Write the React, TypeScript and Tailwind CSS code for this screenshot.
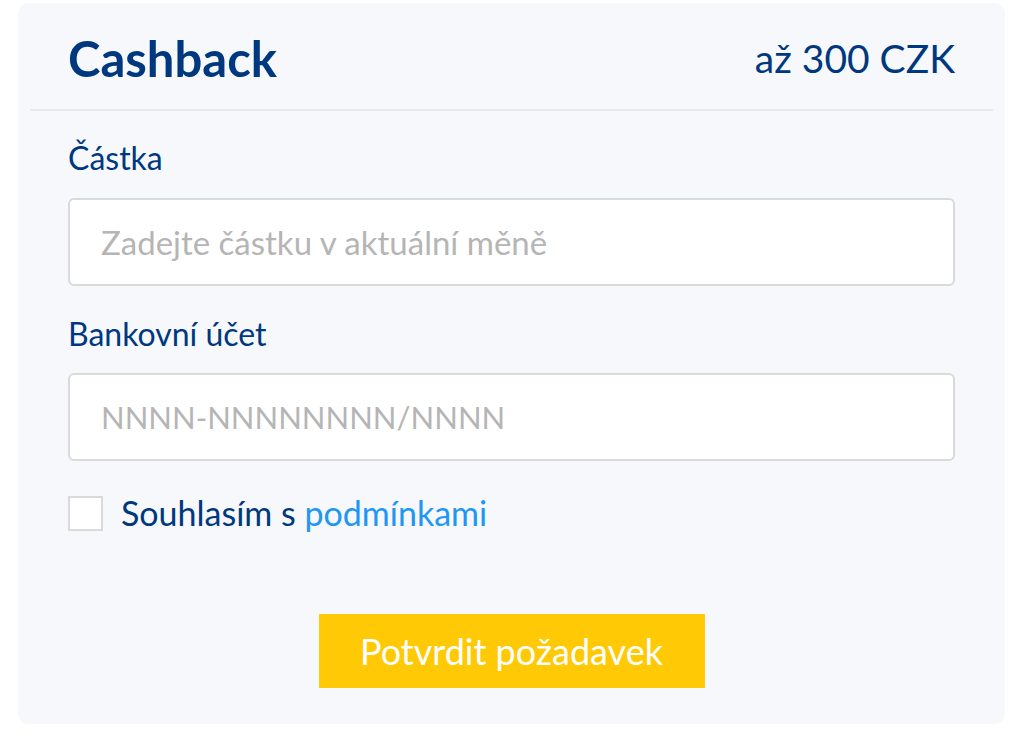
import { useState } from "react";

export default function App() {
  const [agree, setAgree] = useState(false);

  return (
    <div className="min-h-screen bg-white pl-[18px] pt-[3px] pr-[8px]">
      <div
        className="w-[987px] h-[721px] rounded-[10px] bg-[#f7f8fc] text-[#00387f]"
        style={{ fontFamily: '"Lato", "Noto Sans", sans-serif' }}
      >
        <div className="mx-3 border-b-2 border-[#e9eaee]">
          <div className="flex items-center justify-between h-[106px] pt-[4px] px-[38px]">
            <h1 className="text-[49px] font-bold leading-none">Cashback</h1>
            <span className="text-[39px] leading-none">až 300 CZK</span>
          </div>
        </div>

        <form className="px-[50px] pt-[29px]" onSubmit={(e) => e.preventDefault()}>
          <label className="block text-[32px] leading-[36px]">Částka</label>
          <input
            type="text"
            placeholder="Zadejte částku v aktuální měně"
            className="mt-[22px] w-full h-[88px] rounded-[6px] border-2 border-[#dadada] bg-white px-[31px] text-[33px] placeholder-[#b5b5b5] outline-none"
          />

          <label className="block mt-[30px] text-[32px] leading-[36px]">Bankovní účet</label>
          <input
            type="text"
            placeholder="NNNN-NNNNNNNN/NNNN"
            className="mt-[21px] w-full h-[88px] rounded-[6px] border-2 border-[#dadada] bg-white px-[31px] text-[31px] placeholder-[#b5b5b5] outline-none"
          />

          <label className="mt-[34px] flex items-center gap-[18px] text-[34px] leading-[36px] cursor-pointer">
            <input
              type="checkbox"
              checked={agree}
              onChange={(e) => setAgree(e.target.checked)}
              className="appearance-none shrink-0 w-[35px] h-[35px] border-2 border-[#dadada] bg-white checked:bg-[#00387f]"
            />
            <span>
              Souhlasím s <a href="#" className="text-[#2196f3]">podmínkami</a>
            </span>
          </label>

          <div className="mt-[83px] flex justify-center">
            <button
              type="submit"
              className="w-[386px] h-[74px] bg-[#ffc905] text-white text-[36px]"
            >
              Potvrdit požadavek
            </button>
          </div>
        </form>
      </div>
    </div>
  );
}
